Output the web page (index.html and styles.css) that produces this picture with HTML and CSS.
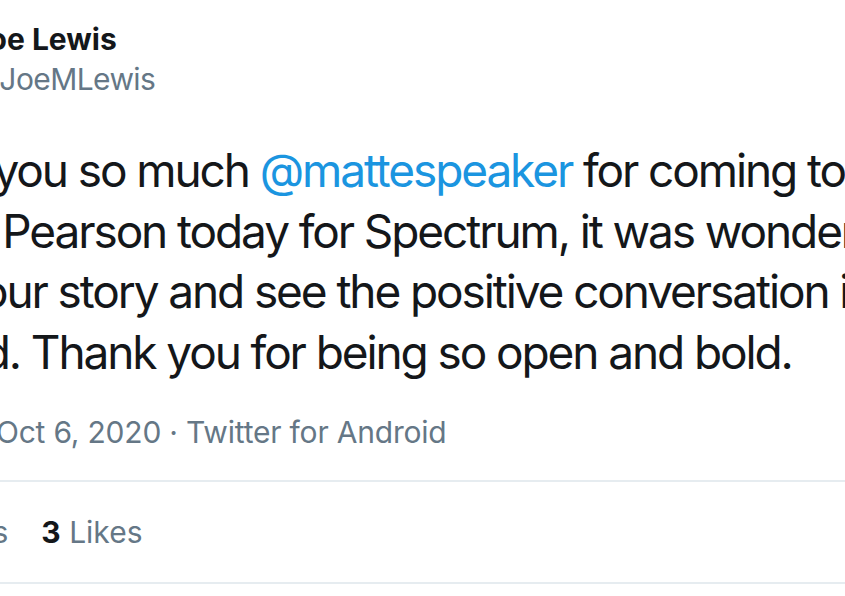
FILE: index.html
```html
<!DOCTYPE html>
<html lang="en">
<head>
<meta charset="utf-8">
<title>Tweet</title>
<link rel="stylesheet" href="styles.css">
</head>
<body>
<article class="tweet">
  <header class="header">
    <div class="avatar"></div>
    <div class="names">
      <div class="name">Joe Lewis</div>
      <div class="handle">@JoeMLewis</div>
    </div>
  </header>
  <div class="text">
    <div class="line">Thank you so much <span class="mention">@mattespeaker</span> for coming to</div>
    <div class="line">chat at Pearson today for Spectrum, it was wonderful to</div>
    <div class="line">hear your story and see the positive conversation it has</div>
    <div class="line">created. Thank you for being so open and bold.</div>
  </div>
  <div class="meta">2:31 PM · Oct 6, 2020 · Twitter for Android</div>
  <div class="stats">
    <span class="stat"><b>2</b> Retweets</span>
    <span class="stat"><b>3</b> Likes</span>
  </div>
</article>
</body>
</html>
```
FILE: styles.css
```css
html, body {
  margin: 0;
  padding: 0;
  background: #ffffff;
  overflow: hidden;
}
body {
  width: 845px;
  height: 596px;
  font-family: Inter, "Noto Sans", sans-serif;
  color: #14171a;
}
.tweet {
  margin-left: -140px;
  width: 1400px;
  padding-top: 19px;
}
.header {
  display: flex;
  align-items: flex-start;
  gap: 15px;
  height: 80px;
}
.avatar {
  width: 96px;
  height: 80px;
  border-radius: 50%;
  background: #ccd6dd;
  flex: none;
}
.name {
  font-size: 30px;
  line-height: 40px;
  font-weight: 700;
  white-space: nowrap;
}
.handle {
  font-size: 30px;
  line-height: 40px;
  color: #657786;
  white-space: nowrap;
  letter-spacing: -0.6px;
}
.text {
  margin-top: 41px;
  margin-left: -2px;
  font-size: 46px;
  line-height: 60.5px;
  letter-spacing: -2.1px;
}
.line {
  white-space: nowrap;
}
.mention {
  color: #1b95e0;
}
.meta {
  margin-top: 30px;
  font-size: 30px;
  line-height: 40px;
  letter-spacing: -0.2px;
  color: #657786;
  white-space: nowrap;
  padding-bottom: 28px;
  border-bottom: 2px solid #e6ecf0;
  width: 1100px;
}
.stats {
  display: flex;
  gap: 33px;
  margin-left: -10px;
  padding: 30px 0;
  font-size: 30px;
  line-height: 40px;
  color: #657786;
  border-bottom: 2px solid #e6ecf0;
  width: 1100px;
  white-space: nowrap;
}
.stat b {
  color: #14171a;
  font-weight: 700;
}
```
